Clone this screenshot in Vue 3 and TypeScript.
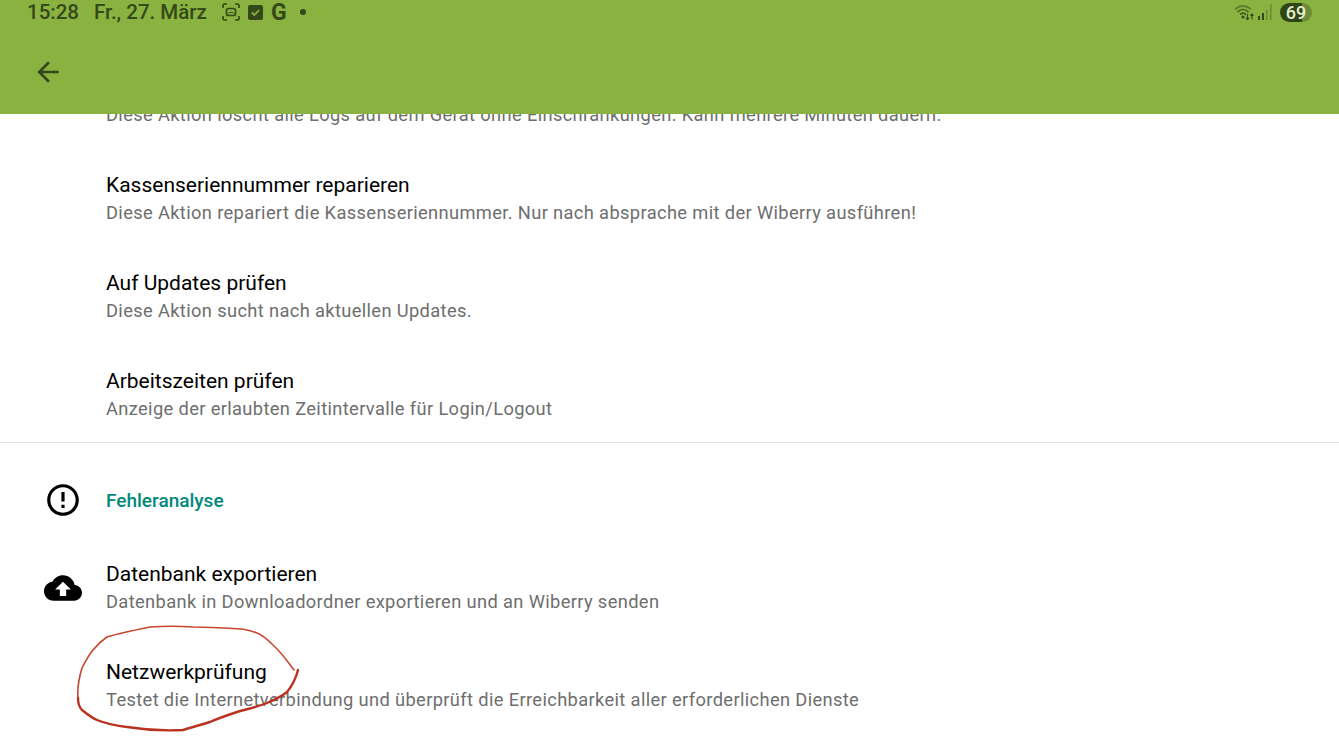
<template>
  <div class="screen">
    <header class="appbar">
      <div class="status">
        <span class="time">15:28</span>
        <span class="date">Fr., 27. März</span>
        <div class="notifs">
          <svg class="ic-shot" viewBox="0 0 18 18" fill="none" stroke="#33491a" stroke-width="1.7">
            <path d="M1 5V2.5A1.5 1.5 0 0 1 2.5 1H5M13 1h2.500A1.500 1.500 0 0 1 17 2.500V5M17 13v2.500a1.500 1.500 0 0 1-1.500 1.500H13M5 17H2.500A1.500 1.500 0 0 1 1 15.500V13" />
            <rect x="4.500" y="5.500" width="9" height="7" rx="2" />
            <path d="M6.500 10.500l1.500-1.500 1.200 1 1-1 1.300 1.500" stroke-width="1" />
          </svg>
          <svg class="ic-check" viewBox="0 0 15 15">
            <path fill="#33491a" d="M2 0h11a2 2 0 0 1 2 2v11a2 2 0 0 1-2 2H2a2 2 0 0 1-2-2V2a2 2 0 0 1 2-2z" />
            <path fill="none" stroke="#8ab241" stroke-width="1.800" d="M3.800 7.500l2.600 2.500 4.800-5" />
          </svg>
          <span class="g">G</span>
          <span class="dot"></span>
        </div>
        <div class="sys">
          <svg class="ic-wifi" viewBox="0 0 20 16" fill="none" stroke="#3f5a1c" stroke-width="1.800">
            <path d="M1 5.500C5.500 .8 12.500 .8 17 5.500" opacity=".6" />
            <path d="M3.500 8C6.800 4.800 11.200 4.800 14.500 8" opacity=".85" />
            <path d="M6 10.500c2-1.800 4-1.800 6 0" />
            <circle cx="9" cy="13" r="1.500" fill="#33491a" stroke="none" />
            <path d="M13.500 10v5.500M12 14l1.500 1.500 1.500-1.500M18 15.500V10M16.500 11.500L18 10l1.500 1.500" stroke="#33491a" stroke-width="1.200" />
          </svg>
          <svg class="ic-signal" viewBox="0 0 14 16" fill="#33491a">
            <rect x="0" y="12" width="2" height="4" />
            <rect x="4" y="9" width="2" height="7" />
            <rect x="8" y="5" width="1.600" height="11" opacity=".35" />
            <rect x="12" y="0" width="1.600" height="16" opacity=".35" />
          </svg>
          <span class="battery">69</span>
        </div>
      </div>
      <div class="toolbar">
        <svg class="ic-back" viewBox="0 0 24 24"><path d="M20 11H7.830l5.590-5.590L12 4l-8 8 8 8 1.410-1.410L7.830 13H20v-2z" /></svg>
      </div>
    </header>

    <main class="list">
      <section class="group first">
        <div v-for="r in actions" :key="r.sub" class="row">
          <div class="slot"></div>
          <div class="text">
            <div class="title">{{ r.title }}</div>
            <div class="sub">{{ r.sub }}</div>
          </div>
        </div>
      </section>
      <hr class="divider" />
      <section class="group second">
        <div class="heading">
          <div class="slot">
            <svg class="icon" viewBox="0 0 24 24"><path d="M11 15h2v2h-2zm0-8h2v6h-2zm.99-5C6.470 2 2 6.480 2 12s4.470 10 9.990 10C17.520 22 22 17.520 22 12S17.520 2 11.990 2zM12 20c-4.420 0-8-3.580-8-8s3.580-8 8-8 8 3.580 8 8-3.580 8-8 8z" /></svg>
          </div>
          <span class="heading-label">Fehleranalyse</span>
        </div>
        <div class="row">
          <div class="slot">
            <svg class="icon" viewBox="0 0 24 24"><path d="M19.350 10.040C18.670 6.590 15.640 4 12 4 9.110 4 6.600 5.640 5.350 8.040 2.340 8.360 0 10.910 0 14c0 3.310 2.690 6 6 6h13c2.760 0 5-2.240 5-5 0-2.640-2.050-4.780-4.650-4.960zM14 13v4h-4v-4H7l5-5 5 5h-3z" /></svg>
          </div>
          <div class="text">
            <div class="title">Datenbank exportieren</div>
            <div class="sub">Datenbank in Downloadordner exportieren und an Wiberry senden</div>
          </div>
        </div>
        <div class="row">
          <div class="slot"></div>
          <div class="text">
            <div class="title">Netzwerkprüfung</div>
            <div class="sub">Testet die Internetverbindung und überprüft die Erreichbarkeit aller erforderlichen Dienste</div>
          </div>
        </div>
      </section>
    </main>

    <svg class="scribble" viewBox="0 0 1339 742" fill="none" stroke-linecap="round" stroke-linejoin="round">
      <path :d="scribbleTop" stroke="#c8452f" stroke-width="1.600" />
      <path :d="scribbleBottom" stroke="#bb3220" stroke-width="2.400" />
    </svg>
  </div>
</template>

<script setup lang="ts">
// first entry sits scrolled under the app bar, its title can't be read
const actions = [
  { title: '', sub: 'Diese Aktion löscht alle Logs auf dem Gerät ohne Einschränkungen. Kann mehrere Minuten dauern.' },
  { title: 'Kassenseriennummer reparieren', sub: 'Diese Aktion repariert die Kassenseriennummer. Nur nach absprache mit der Wiberry ausführen!' },
  { title: 'Auf Updates prüfen', sub: 'Diese Aktion sucht nach aktuellen Updates.' },
  { title: 'Arbeitszeiten prüfen', sub: 'Anzeige der erlaubten Zeitintervalle für Login/Logout' },
]

// hand drawn circle round the last entry, thin going up, heavier coming back
const scribbleTop =
  'M294 670 C288 662 281 652 273 645 C267 639 263 635 257 633 C250 630 246 630 242 629 ' +
  'C225 628 210 627 193 627 C178 626 165 626 150 627 C135 630 120 633 107 637 C101 641 97 645 93 650 ' +
  'C88 656 85 662 82 668 C79 678 77 688 78 698'
const scribbleBottom =
  'M78 698 C78 703 79 707 82 710 C87 714 92 718 97 720 ' +
  'C107 724 117 726 127 727 C146 730 165 731 183 730 C192 727 201 725 210 722 C219 718 228 715 237 712 ' +
  'C247 709 257 707 267 703 C274 700 281 697 287 692 C292 686 296 678 298 670'
</script>

<style>
html, body { margin: 0; background: #fff; }
</style>

<style scoped>
.screen {
  position: relative;
  width: 1339px;
  height: 742px;
  overflow: hidden;
  display: flex;
  flex-direction: column;
  background: #fff;
  font-family: Roboto, "Liberation Sans", sans-serif;
}
.appbar {
  flex: none;
  height: 114px;
  background: #8ab241;
  color: #33491a;
}
.status {
  height: 24px;
  display: flex;
  align-items: center;
  padding: 0 27px;
  font-size: 20.500px;
  font-weight: 500;
}
.date { margin-left: 15px; }
.notifs {
  display: flex;
  align-items: center;
  margin-left: 15px;
}
.ic-shot { width: 18px; height: 18px; }
.ic-check { width: 15px; height: 15px; margin-left: 8px; }
.g { margin-left: 8px; font-size: 23px; font-weight: 700; line-height: 1; }
.dot {
  width: 6px;
  height: 6px;
  margin-left: 13px;
  border-radius: 50%;
  background: #33491a;
}
.sys {
  margin-left: auto;
  display: flex;
  align-items: center;
}
.ic-wifi { width: 20px; height: 16px; }
.ic-signal { width: 14px; height: 16px; margin-left: 4px; }
.battery {
  width: 32px;
  height: 19px;
  margin-left: 8px;
  border-radius: 10px;
  background: linear-gradient(90deg, #2f4515 0 69%, #6b8a3a 69%);
  color: #e4edcf;
  font-size: 18px;
  font-weight: 500;
  line-height: 19px;
  text-align: center;
}
.toolbar {
  display: flex;
  padding: 32px 0 0 32px;
}
.ic-back { width: 32px; height: 32px; fill: #33491a; }

.list {
  flex: 1;
  min-height: 0;
  overflow: hidden;
}
.group { display: flex; flex-direction: column; gap: 44px; }
.first { margin-top: -40px; padding-bottom: 20px; }
.row { display: flex; align-items: center; }
.slot {
  flex: none;
  width: 106px;
  padding-left: 44px;
  box-sizing: border-box;
  display: flex;
}
.icon { width: 38px; height: 38px; fill: #000; }
.text { height: 54px; }
.title {
  height: 27px;
  font-size: 21px;
  line-height: 27px;
  color: #000;
}
.sub {
  height: 27px;
  font-size: 18.300px;
  line-height: 27px;
  letter-spacing: .36px;
  color: #6e6e6e;
  white-space: nowrap;
}
.divider {
  margin: 0;
  border: 0;
  height: 1px;
  background: #e2e2e2;
}
.heading {
  display: flex;
  align-items: center;
  height: 38px;
  margin-top: 38px;
  margin-bottom: -2px;
}
.heading-label {
  font-size: 19px;
  font-weight: 500;
  color: #00897b;
}
.scribble {
  position: absolute;
  inset: 0;
  width: 1339px;
  height: 742px;
  pointer-events: none;
}
</style>
